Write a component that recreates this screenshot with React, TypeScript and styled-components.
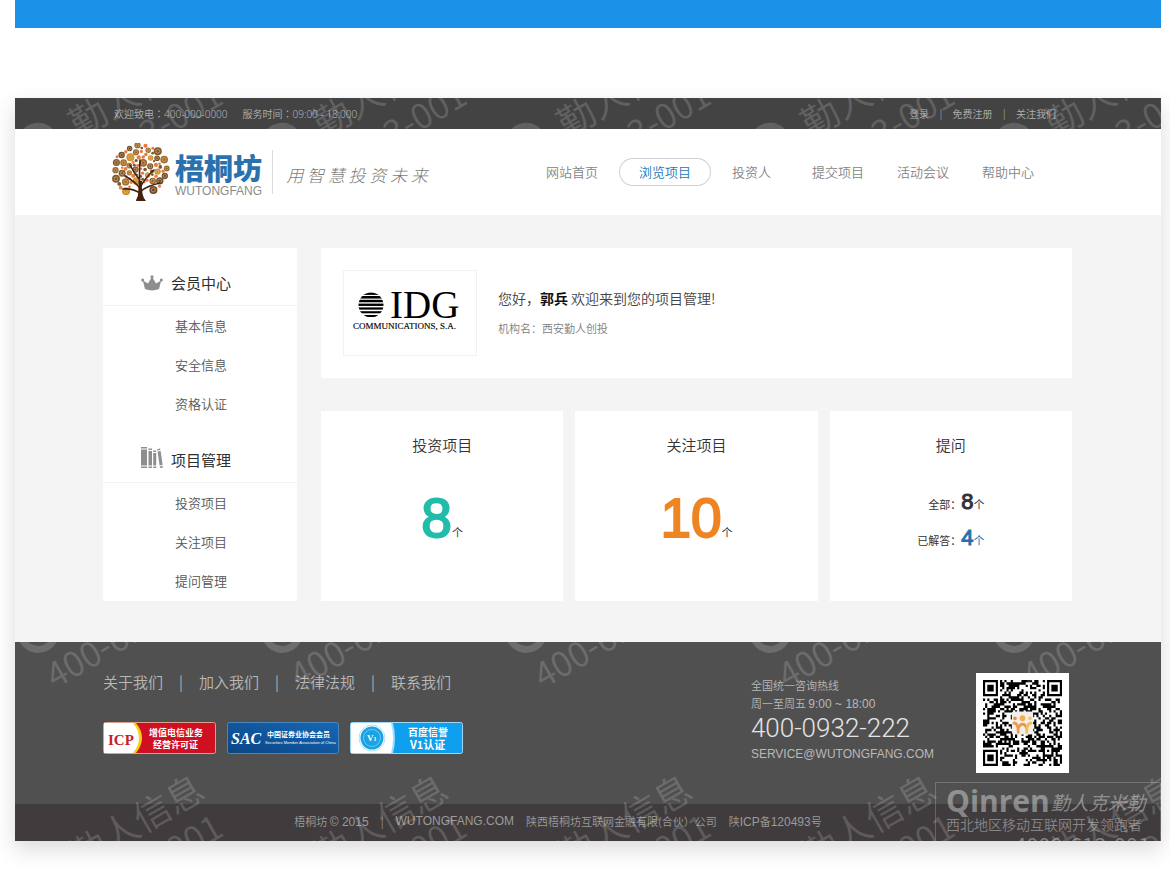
import React from 'react';
import styled, { createGlobalStyle, css } from 'styled-components';

const GlobalStyle = createGlobalStyle`
  * { box-sizing: border-box; }
  body {
    margin: 0;
    background: #fff;
    font-family: "Noto Sans CJK SC", sans-serif;
    font-weight: 350;
  }
  a { color: inherit; text-decoration: none; }
  ul { list-style: none; margin: 0; padding: 0; }
  h2, h3, p, dl, dd, dt { margin: 0; font-weight: inherit; }
  svg { display: block; }
`;

const Page = styled.div`
  padding: 0 9px 29px 15px;
`;

const Banner = styled.div`
  height: 28px;
  margin-bottom: 70px;
  background: #1b92e7;
`;

const Frame = styled.div`
  position: relative;
  box-shadow: 0 8px 20px rgba(60, 50, 50, 0.18);
`;

const inset = css`
  padding-left: 88px;
  padding-right: 89px;
`;

const TopBar = styled.div`
  ${inset}
  display: flex;
  justify-content: space-between;
  align-items: center;
  height: 31px;
  background: #434343;
  color: #b2b2b2;
  font-family: "Noto Sans", "Noto Sans CJK TC", sans-serif;
  font-size: 10px;
`;

const TopInfo = styled.div`
  display: flex;
  gap: 15px;
  padding-left: 11px;
`;

const TopLinks = styled.div`
  display: flex;
  gap: 9px;
  padding-right: 16px;
`;

const Header = styled.header`
  ${inset}
  position: relative;
  z-index: 1;
  display: flex;
  align-items: center;
  height: 86px;
  background: #fff;
`;

const Brand = styled.a`
  display: flex;
  align-items: center;
  gap: 5px;
  padding: 0 10px 0 7px;
  border-right: 1px solid #dcdcdc;
  height: 44px;
`;

const BrandName = styled.span`
  display: flex;
  flex-direction: column;
  padding-top: 4px;
`;

const BrandTitle = styled.span`
  font-size: 29px;
  line-height: 33px;
  font-weight: 900;
  color: #2a71ad;
`;

const BrandSub = styled.span`
  font: 12px/14px "Liberation Sans", sans-serif;
  color: #8c8c8c;
`;

const Slogan = styled.p`
  margin-left: 13px;
  padding-top: 4px;
  font-size: 17px;
  font-style: italic;
  font-weight: 300;
  color: #7c7c7c;
`;

const Nav = styled.nav`
  display: flex;
  gap: 1px;
  margin-left: auto;
  padding-right: 18px;
`;

const NavLink = styled.a<{ $active?: boolean; $tight?: boolean }>`
  padding: ${p => (p.$tight ? '0 20px 0 12px' : '0 20px')};
  font-size: 13px;
  line-height: 28px;
  border-radius: 14px;
  color: ${p => (p.$active ? '#2079b8' : '#858585')};
  box-shadow: ${p => (p.$active ? 'inset 0 0 0 1px #ccd2d8' : 'none')};
`;

const Body = styled.main`
  ${inset}
  position: relative;
  z-index: 1;
  display: flex;
  gap: 24px;
  padding-top: 33px;
  padding-bottom: 41px;
  background: #f4f4f4;
`;

const Sidebar = styled.aside`
  flex: 0 0 194px;
  display: flex;
  flex-direction: column;
  gap: 2px;
  background: #fff;
`;

const SideHeading = styled.h2`
  display: flex;
  align-items: center;
  gap: 8px;
  height: 58px;
  padding: 12px 0 0 38px;
  border-bottom: 1px solid #f2f2f2;
  font-size: 15px;
  font-weight: 400;
  color: #2e2e2e;
`;

const SideItem = styled.li`
  padding-left: 72px;
  font-size: 13px;
  line-height: 39px;
  color: #555;
`;

const Main = styled.div`
  flex: 1;
  display: flex;
  flex-direction: column;
  gap: 33px;
`;

const Welcome = styled.section`
  display: flex;
  align-items: flex-start;
  gap: 21px;
  padding: 22px;
  background: #fff;
`;

const OrgLogo = styled.div`
  width: 134px;
  height: 86px;
  padding: 17px 8px;
  border: 1px solid #f2f2f2;
`;

const Greeting = styled.div`
  padding-top: 17px;
  font-size: 14px;
  line-height: 22px;
  color: #444;

  strong { font-weight: 700; color: #111; }
`;

const OrgName = styled.p`
  margin-top: 9px;
  font-size: 11px;
  line-height: 20px;
  color: #808080;
`;

const Stats = styled.section`
  display: grid;
  grid-template-columns: repeat(3, 1fr);
  gap: 12px;
`;

const StatCard = styled.article`
  display: flex;
  flex-direction: column;
  align-items: center;
  height: 190px;
  padding-top: 22px;
  background: #fff;
`;

const StatTitle = styled.h3`
  font-size: 15px;
  line-height: 24px;
  color: #333;
`;

const StatValue = styled.p<{ $color: string }>`
  margin-top: 29px;
  font-size: 11px;
  font-weight: 400;
  line-height: 64px;
  color: #333;

  b {
    font: 400 55px/64px "Liberation Sans", sans-serif;
    color: ${p => p.$color};
    -webkit-text-stroke: 2px ${p => p.$color};
  }
`;

const Counts = styled.dl`
  margin-top: 27px;
  font-size: 11px;
  font-weight: 400;
  line-height: 36px;
  color: #333;
`;

const CountRow = styled.div<{ $color: string }>`
  display: flex;
  justify-content: flex-end;
  align-items: baseline;
  height: 36px;

  dd { color: ${p => p.$color}; }
  b {
    font: 400 22px/36px "Liberation Sans", sans-serif;
    -webkit-text-stroke: 1px ${p => p.$color};
  }
`;

const Footer = styled.footer`
  background: #505050;
  color: #b8b8b8;
`;

const FooterMain = styled.div`
  ${inset}
  display: flex;
  align-items: flex-start;
  height: 162px;
  padding-top: 29px;
`;

const FooterLinks = styled.div`
  display: flex;
  gap: 16px;
  margin-bottom: 29px;
  font-size: 15px;
  line-height: 22px;
`;

const Badges = styled.div`
  display: flex;
  gap: 11px;
`;

const Contact = styled.address`
  margin-left: auto;
  padding-top: 5px;
  font-style: normal;
  font-size: 11px;
  line-height: 18px;
`;

const Phone = styled.p`
  font: 300 26px/30px Roboto, sans-serif;
  color: #e4e4e4;
`;

const Mail = styled.a`
  display: block;
  font: 300 12px/22px "Liberation Sans", sans-serif;
`;

const QrBox = styled.div`
  margin: 2px 3px 0 42px;
  padding: 7px;
  background: #fff;
`;

const Legal = styled.div`
  display: flex;
  justify-content: center;
  gap: 12px;
  height: 37px;
  padding-right: 60px;
  background: #403c3d;
  color: #9c9a9a;
  font-size: 11px;
  line-height: 35px;
`;

const Latin = styled.span`
  font-family: "Liberation Sans", sans-serif;
  font-size: 12px;
`;

const Watermark = styled.svg`
  position: absolute;
  inset: 0;
  width: 100%;
  height: 100%;
  pointer-events: none;
  fill: #fff;
  opacity: 0.16;
`;

const Signature = styled.div`
  position: absolute;
  right: 0;
  bottom: 0;
  width: 226px;
  height: 59px;
  padding: 3px 0 0 10px;
  overflow: hidden;
  border: 1px solid rgba(255, 255, 255, 0.2);
  border-bottom: 0;
  color: rgba(255, 255, 255, 0.38);
  pointer-events: none;
`;

const SignatureName = styled.div`
  display: flex;
  align-items: center;
  height: 30px;
  font-size: 19px;
  font-style: italic;
  font-weight: 400;
  white-space: nowrap;

  b { font: 700 30px/30px "Open Sans", sans-serif; margin-right: 1px; }
`;

const SignatureLine = styled.div`
  font-size: 14px;
  line-height: 16px;
  white-space: nowrap;
`;

const SignaturePhone = styled.div`
  padding-right: 10px;
  text-align: right;
  font-size: 22px;
  line-height: 24px;
`;

function random(seed: number) {
  let s = seed;
  return () => {
    s = (s * 1103515245 + 12345) % 2147483648;
    return s / 2147483648;
  };
}

function TreeLogo() {
  const next = random(11);
  const dots: React.ReactNode[] = [];
  const placed: number[][] = [];
  for (let i = 0; i < 4000 && placed.length < 110; i++) {
    const a = next() * Math.PI * 2;
    const d = Math.sqrt(next()) * 27;
    const r = i < 200 ? 2.6 + next() * 1.7 : 1.2 + next() * 1.1;
    const x = 30 + Math.cos(a) * d;
    const y = 27 + Math.sin(a) * d * 0.94;
    if (y > 40 && x > 20 && x < 41) continue;
    if (placed.some(p => Math.hypot(p[0] - x, p[1] - y) < p[2] + r)) continue;
    placed.push([x, y, r]);
    const tone = ['#80592f', '#d0922c', '#a06f2e', '#6e4a28', '#94652c'][placed.length % 5];
    dots.push(
      r > 2.3 ? (
        <g key={placed.length}>
          <circle cx={x} cy={y} r={r} fill={tone} />
          <circle cx={x} cy={y} r={r * 0.5} fill="none" stroke="#e3b978" strokeWidth=".6" />
        </g>
      ) : (
        <circle key={placed.length} cx={x} cy={y} r={r} fill={placed.length % 3 ? '#ea7a44' : '#7a5530'} />
      )
    );
  }
  return (
    <svg width="60" height="58" viewBox="0 0 60 58" aria-hidden="true">
      {dots}
      <path d="M27 57 Q30 52 29 44 Q24 38 15 33 M30 46 Q29 34 30 17 M30 45 Q34 36 44 27 M31 48 Q37 43 50 40 M29 36 Q24 30 20 22 M30 50 Q22 45 13 46" fill="none" stroke="#43200f" strokeWidth="1.6" strokeLinecap="round" />
      <path d="M26 58 Q30 53 28.500 38 L32 38 Q31 53 36 58 Z" fill="#43200f" />
    </svg>
  );
}

function CrownIcon() {
  return (
    <svg width="22" height="16" viewBox="0 0 22 16" fill="#8e8e8e" aria-hidden="true">
      <circle cx="11" cy="1.800" r="1.600" /><circle cx="1.600" cy="5" r="1.500" /><circle cx="20.400" cy="5" r="1.500" />
      <path d="M1.800 5.500 L7 8.500 L10.500 2.500 H11.500 L15 8.500 L20.200 5.500 L18 14 Q11 16.800 4 14 Z" />
    </svg>
  );
}

function BooksIcon() {
  return (
    <svg width="22" height="26" viewBox="0 0 22 26" fill="#8e8e8e" aria-hidden="true">
      <path d="M0 0h6v1.500H0z M0 2.500h6v16H0z M0 19.500h6V21H0z M7.500 1.500h3.500V3H7.500z M7.500 4h3.500v14.500H7.500z M7.500 19.500H11V21H7.500z M12.200 3.500h3V5h-3z M12.200 6h3v12.500h-3z M12.200 19.500h3V21h-3z M16 2.200l3-.7.400 1.500-3 .6z M16.600 4.600l3-.6 2 14-3 .6z M18.800 19.600l2.900-.5.300 1.500-2.900.5z" />
    </svg>
  );
}

function IdgLogo() {
  return (
    <svg width="116" height="44" viewBox="0 0 116 44" aria-label="IDG Communications">
      <clipPath id="globe"><circle cx="19" cy="17" r="12.500" /></clipPath>
      <g clipPath="url(#globe)" fill="#000">
        {[0, 1, 2, 3, 4, 5, 6].map(i => (
          <rect key={i} x="6" y={4.2 + i * 3.8} width="26" height={2.7 - i * 0.12} />
        ))}
      </g>
      <g fontFamily="Liberation Serif, serif" fill="#000">
        <text x="38" y="30" fontSize="39">IDG</text>
        <text x="1" y="41" fontSize="9" stroke="#000" strokeWidth=".15">COMMUNICATIONS, S.A.</text>
      </g>
    </svg>
  );
}

function IcpBadge() {
  return (
    <svg width="113" height="32" viewBox="0 0 113 32" aria-label="ICP">
      <rect x=".5" y=".5" width="112" height="31" rx="2" fill="#cf1020" stroke="#d9a08a" />
      <path d="M1 1H33Q45 16 33 31H1Z" fill="#f5cf16" />
      <path d="M1 1H30Q42 16 30 31H1Z" fill="#fff" />
      <text x="5" y="23" fontFamily="Liberation Serif, serif" fontWeight="700" fontSize="15" fill="#c5202b">ICP</text>
      <g fontSize="9" fontWeight="700" fill="#fff">
        <text x="46" y="14">增值电信业务</text>
        <text x="50" y="26">经营许可证</text>
      </g>
    </svg>
  );
}

function SacBadge() {
  return (
    <svg width="112" height="32" viewBox="0 0 112 32" aria-label="SAC">
      <defs>
        <linearGradient id="sac" x1="0" y1="1" x2="1" y2="0">
          <stop offset="0" stopColor="#0b4486" /><stop offset="1" stopColor="#1668b4" />
        </linearGradient>
      </defs>
      <rect x=".5" y=".5" width="111" height="31" rx="2" fill="url(#sac)" stroke="#4a86bd" />
      <g fill="#fff">
        <text x="4" y="22" fontFamily="Liberation Serif, serif" fontStyle="italic" fontWeight="700" fontSize="16">SAC</text>
        <text x="40" y="15" fontSize="7" fontWeight="700">中国证券业协会会员</text>
        <text x="38" y="22" fontSize="4" fontFamily="Liberation Sans, sans-serif">Securities Member Association of China</text>
      </g>
    </svg>
  );
}

function TrustBadge() {
  return (
    <svg width="113" height="32" viewBox="0 0 113 32" aria-label="V1">
      <rect x=".5" y=".5" width="112" height="31" rx="2" fill="#0ea0ef" stroke="#9fd6f5" />
      <path d="M1 1H43Q47 16 43 31H1Z" fill="#9bdcff" />
      <path d="M1 1H41Q45 16 41 31H1Z" fill="#fff" />
      <circle cx="22" cy="16" r="13" fill="none" stroke="#8ed3f5" strokeWidth=".7" />
      <circle cx="22" cy="16" r="11.500" fill="#1ba3e4" />
      <circle cx="22" cy="16" r="8.500" fill="none" stroke="#9bdcff" strokeWidth=".6" />
      <text x="17" y="19" fontFamily="Liberation Serif, serif" fontWeight="700" fontSize="9" fill="#fff">V<tspan fontSize="6">1</tspan></text>
      <g fontWeight="700" fill="#fff">
        <text x="58" y="14" fontSize="10">百度信誉</text>
        <text x="60" y="27" fontSize="11">V1认证</text>
      </g>
    </svg>
  );
}

const QR_SIZE = 37;

function QrCode() {
  const next = random(2015);
  let d = '';
  const inCorner = (x: number, y: number) =>
    (x < 8 && y < 8) || (x >= QR_SIZE - 8 && y < 8) || (x < 8 && y >= QR_SIZE - 8);
  for (let y = 0; y < QR_SIZE; y++) {
    for (let x = 0; x < QR_SIZE; x++) {
      const on = next() > 0.5;
      const centre = Math.abs(x - 18) < 5 && Math.abs(y - 18) < 5;
      const align = Math.max(Math.abs(x - 30), Math.abs(y - 30));
      if (inCorner(x, y) || centre) continue;
      if (align <= 2 ? align !== 1 : on) d += `M${x} ${y}h1v1h-1z`;
    }
  }
  for (const [x, y] of [[0, 0], [QR_SIZE - 7, 0], [0, QR_SIZE - 7]]) {
    d += `M${x} ${y}h7v7h-7z M${x + 1} ${y + 1}v5h5v-5z M${x + 2} ${y + 2}h3v3h-3z`;
  }
  return (
    <svg width="79" height="86" viewBox={`0 0 ${QR_SIZE} ${QR_SIZE}`} preserveAspectRatio="none" shapeRendering="geometricPrecision" aria-label="QR">
      <path d={d} fill="#000" />
      <rect x="13.500" y="13.500" width="10" height="10" rx="1" fill="#f3eee9" />
      <g fill="none" stroke="#ee9a4c" strokeWidth="1.300" strokeLinecap="round">
        <path d="M14.500 18.500q2 0 2 4 M16.500 21q.5-2 2-2t2 2" />
        <path d="M22.500 18.500q-2 0-2 4" stroke="#f0c050" />
      </g>
      <circle cx="18.500" cy="16.500" r="1.300" fill="#f0b050" />
      <circle cx="15" cy="16.500" r=".8" fill="#ee8a4c" /><circle cx="22" cy="16.500" r=".8" fill="#eecb6c" />
    </svg>
  );
}

const TILE = 244;
const MARK_ROWS = [0, 2, 3];
const MARK_COLUMNS = [0, 1, 2, 3, 4];

function WatermarkLayer() {
  return (
    <Watermark aria-hidden="true">
      {MARK_ROWS.map(row =>
        MARK_COLUMNS.map(col => (
          <g key={`${row}-${col}`} transform={`translate(${23 + col * TILE} ${46 + row * TILE})`}>
            <path d="M12 -13 A17.500 17.500 0 1 0 17.500 2 H4" fill="none" stroke="#fff" strokeWidth="7" />
            <g transform="rotate(-30)">
              <text x="38" y="16" fontSize="37">勤人信息</text>
              <text x="-14" y="58" fontSize="35">400-613-001</text>
            </g>
          </g>
        ))
      )}
    </Watermark>
  );
}

const menu = [
  { title: '会员中心', icon: <CrownIcon />, items: ['基本信息', '安全信息', '资格认证'] },
  { title: '项目管理', icon: <BooksIcon />, items: ['投资项目', '关注项目', '提问管理'] },
];

const navItems = [
  { label: '网站首页' },
  { label: '浏览项目', active: true },
  { label: '投资人' },
  { label: '提交项目' },
  { label: '活动会议', tight: true },
  { label: '帮助中心', tight: true },
];

function withBars(labels: string[]) {
  return labels.map((label, i) => (
    <React.Fragment key={label}>
      {i > 0 && <span>|</span>}
      <a href="#">{label}</a>
    </React.Fragment>
  ));
}

export default function App() {
  return (
    <Page>
      <GlobalStyle />
      <Banner />
      <Frame>
        <TopBar>
          <TopInfo>
            <span>欢迎致电：400-000-0000</span>
            <span>服务时间：09:00 - 18:000</span>
          </TopInfo>
          <TopLinks>{withBars(['登录', '免费注册', '关注我们'])}</TopLinks>
        </TopBar>
        <Header>
          <Brand href="#">
            <TreeLogo />
            <BrandName>
              <BrandTitle>梧桐坊</BrandTitle>
              <BrandSub>WUTONGFANG</BrandSub>
            </BrandName>
          </Brand>
          <Slogan>用 智 慧 投 资 未 来</Slogan>
          <Nav>
            {navItems.map(n => (
              <NavLink key={n.label} href="#" $active={n.active} $tight={n.tight}>{n.label}</NavLink>
            ))}
          </Nav>
        </Header>
        <Body>
          <Sidebar>
            {menu.map(group => (
              <section key={group.title}>
                <SideHeading>{group.icon}{group.title}</SideHeading>
                <ul>
                  {group.items.map(item => (
                    <SideItem key={item}><a href="#">{item}</a></SideItem>
                  ))}
                </ul>
              </section>
            ))}
          </Sidebar>
          <Main>
            <Welcome>
              <OrgLogo><IdgLogo /></OrgLogo>
              <Greeting>
                <p>您好，<strong>郭兵</strong> 欢迎来到您的项目管理!</p>
                <OrgName>机构名：西安勤人创投</OrgName>
              </Greeting>
            </Welcome>
            <Stats>
              <StatCard>
                <StatTitle>投资项目</StatTitle>
                <StatValue $color="#22bcab"><b>8</b>个</StatValue>
              </StatCard>
              <StatCard>
                <StatTitle>关注项目</StatTitle>
                <StatValue $color="#ee8522"><b>10</b>个</StatValue>
              </StatCard>
              <StatCard>
                <StatTitle>提问</StatTitle>
                <Counts>
                  <CountRow $color="#333"><dt>全部：</dt><dd><b>8</b>个</dd></CountRow>
                  <CountRow $color="#2471ad"><dt>已解答：</dt><dd><b>4</b>个</dd></CountRow>
                </Counts>
              </StatCard>
            </Stats>
          </Main>
        </Body>
        <Footer>
          <FooterMain>
            <div>
              <FooterLinks>{withBars(['关于我们', '加入我们', '法律法规', '联系我们'])}</FooterLinks>
              <Badges>
                <IcpBadge />
                <SacBadge />
                <TrustBadge />
              </Badges>
            </div>
            <Contact>
              <p>全国统一咨询热线</p>
              <p>周一至周五 <Latin>9:00 ~ 18:00</Latin></p>
              <Phone>400-0932-222</Phone>
              <Mail href="#">SERVICE@WUTONGFANG.COM</Mail>
            </Contact>
            <QrBox><QrCode /></QrBox>
          </FooterMain>
          <Legal>
            <span>梧桐坊 <Latin>© 2015</Latin></span>
            <span>|</span>
            <Latin>WUTONGFANG.COM</Latin>
            <span>陕西梧桐坊互联网金融有限(合伙）公司</span>
            <span>陕<Latin>ICP</Latin>备<Latin>120493</Latin>号</span>
          </Legal>
        </Footer>
        <WatermarkLayer />
        <Signature>
          <SignatureName><b>Qinren</b>勤人克米勒</SignatureName>
          <SignatureLine>西北地区移动互联网开发领跑者</SignatureLine>
          <SignaturePhone>4000-613-001</SignaturePhone>
        </Signature>
      </Frame>
    </Page>
  );
}
